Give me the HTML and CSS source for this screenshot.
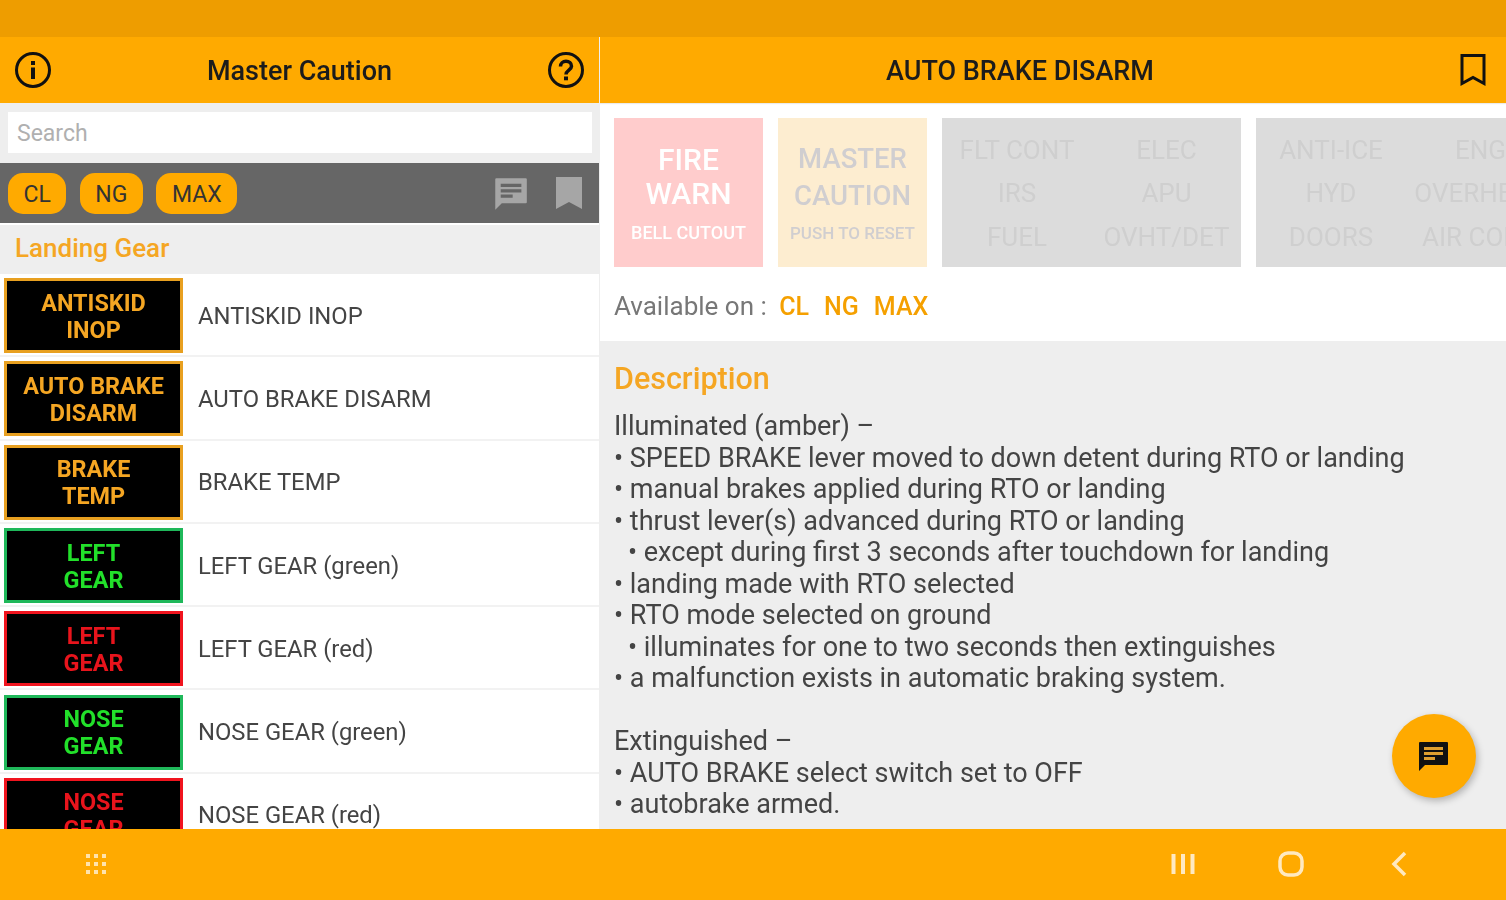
FILE: index.html

```html
<!DOCTYPE html>
<html lang="en">
<head>
  <meta charset="UTF-8" />
  <meta name="viewport" content="width=device-width, initial-scale=1.0"/>
  <title>Master Caution</title>
  <link rel="stylesheet" href="styles.css">
</head>
<body>
  <div class="status-bar"></div>
  <div class="panes">
    <section class="list-pane">
      <header class="app-bar">
        <svg class="bar-icon" viewBox="0 0 38 38"><circle cx="19" cy="19" r="16.5"/><path class="solid" d="M17 16.5h4V28h-4zM17 10h4v4h-4z"/></svg>
        <h1>Master Caution</h1>
        <svg class="bar-icon" viewBox="0 0 38 38"><circle cx="19" cy="19" r="16.5"/><path class="thick" d="M13.5 15.5c0-3.2 2.4-5.2 5.5-5.2s5.500 2 5.500 4.900c0 3.800-5.500 4-5.500 8.300"/><path class="solid" d="M17 25.500h4v3.800h-4z"/></svg>
      </header>
      <div class="search-wrap"><div class="search">Search</div></div>
      <div class="filter-bar">
        <span class="chip">CL</span>
        <span class="chip">NG</span>
        <span class="chip">MAX</span>
        <svg class="filter-icon first" viewBox="0 0 34 34"><path d="M4 3h27a1 1 0 0 1 1 1v21a1 1 0 0 1-1 1H9l-6 6V4a1 1 0 0 1 1-1z"/><path class="cut" d="M8 8h19v3H8zM8 13h19v3H8zM8 18h11v3H8z"/></svg>
        <svg class="filter-icon mark" viewBox="0 0 30 36"><path d="M2 2h26v32l-13-7-13 7z"/></svg>
      </div>
      <div class="group-title">Landing Gear</div>
      <div class="rows">
        <div class="row"><div class="badge amber">ANTISKID<br>INOP</div><span>ANTISKID INOP</span></div>
        <div class="row"><div class="badge amber">AUTO BRAKE<br>DISARM</div><span>AUTO BRAKE DISARM</span></div>
        <div class="row"><div class="badge amber">BRAKE<br>TEMP</div><span>BRAKE TEMP</span></div>
        <div class="row"><div class="badge green">LEFT<br>GEAR</div><span>LEFT GEAR (green)</span></div>
        <div class="row"><div class="badge red">LEFT<br>GEAR</div><span>LEFT GEAR (red)</span></div>
        <div class="row"><div class="badge green">NOSE<br>GEAR</div><span>NOSE GEAR (green)</span></div>
        <div class="row"><div class="badge red">NOSE<br>GEAR</div><span>NOSE GEAR (red)</span></div>
      </div>
    </section>

    <section class="detail-pane">
      <header class="app-bar detail-bar">
        <h1>AUTO BRAKE DISARM</h1>
        <svg class="bookmark" viewBox="0 0 28 34"><path d="M3 2.500h22v28l-11-6-11 6z"/></svg>
      </header>
      <div class="panel-strip">
        <div class="tile fire"><b>FIRE<br>WARN</b><small>BELL CUTOUT</small></div>
        <div class="tile caution"><b>MASTER<br>CAUTION</b><small>PUSH TO RESET</small></div>
        <div class="tile grid-tile">
          <span>FLT CONT</span><span>ELEC</span>
          <span>IRS</span><span>APU</span>
          <span>FUEL</span><span>OVHT/DET</span>
        </div>
        <div class="tile grid-tile last">
          <span>ANTI-ICE</span><span>ENG</span>
          <span>HYD</span><span>OVERHEAD</span>
          <span>DOORS</span><span>AIR COND</span>
        </div>
      </div>
      <div class="available">Available on : <em>CL</em><em>NG</em><em>MAX</em></div>
      <div class="description">
        <h2>Description</h2>
        <p>Illuminated (amber) –</p>
        <p>• SPEED BRAKE lever moved to down detent during RTO or landing</p>
        <p>• manual brakes applied during RTO or landing</p>
        <p>• thrust lever(s) advanced during RTO or landing</p>
        <p class="sub">• except during first 3 seconds after touchdown for landing</p>
        <p>• landing made with RTO selected</p>
        <p>• RTO mode selected on ground</p>
        <p class="sub">• illuminates for one to two seconds then extinguishes</p>
        <p>• a malfunction exists in automatic braking system.</p>
        <p class="blank">&nbsp;</p>
        <p>Extinguished –</p>
        <p>• AUTO BRAKE select switch set to OFF</p>
        <p>• autobrake armed.</p>
        <button class="fab">
          <svg viewBox="0 0 34 34"><path d="M4 3h27a1 1 0 0 1 1 1v21a1 1 0 0 1-1 1H9l-6 6V4a1 1 0 0 1 1-1z"/><path class="fab-lines" d="M8 8h19v3H8zM8 13h19v3H8zM8 18h11v3H8z"/></svg>
        </button>
      </div>
    </section>
  </div>
  <nav class="nav-bar">
    <svg class="nav-apps" viewBox="0 0 22 22"><path d="M1 1h4v4H1zM9 1h4v4H9zM17 1h4v4h-4zM1 9h4v4H1zM9 9h4v4H9zM17 9h4v4h-4zM1 17h4v4H1zM9 17h4v4H9zM17 17h4v4h-4z"/></svg>
    <svg class="nav-recent" viewBox="0 0 26 22"><path d="M1.500 1h4v20h-4zM11 1h4v20h-4zM20.500 1h4v20h-4z"/></svg>
    <svg class="nav-home" viewBox="0 0 26 26"><rect x="2" y="2" width="22" height="22" rx="8"/></svg>
    <svg class="nav-back" viewBox="0 0 18 26"><path d="M15 2 4 13l11 11"/></svg>
  </nav>
</body>
</html>
```

FILE: styles.css

```css
html, body { height: 100%; }
body { margin: 0; height: 900px; overflow: hidden; display: flex; flex-direction: column; font-family: Roboto, sans-serif; background: #fff; color: #333; }
h1, h2, p { margin: 0; }

.status-bar { height: 37px; flex: none; background: #ee9d00; }
/* the source is a soft, upscaled capture */
.panes { flex: 1; min-height: 0; display: flex; filter: blur(0.5px); }

.app-bar { height: 66px; flex: none; display: flex; align-items: center; justify-content: space-between; padding: 0 14px; background: #ffaa00; box-shadow: 0 1px 1px rgba(0,0,0,0.08); }
.app-bar h1 { padding-top: 2px; font-size: 27px; font-weight: 500; color: #1c1c1c; }
.bar-icon { width: 38px; height: 38px; fill: none; stroke: #111; stroke-width: 3; }
.bar-icon .solid { fill: #111; stroke: none; }
.bar-icon .thick { stroke-width: 3.500; }

.list-pane { width: 600px; flex: none; display: flex; flex-direction: column; overflow: hidden; border-right: 1px solid #eee; box-sizing: border-box; }
.search-wrap { height: 60px; flex: none; box-sizing: border-box; padding: 9px 7px 10px 8px; background: #eeeeee; }
.search { height: 41px; line-height: 43px; padding-left: 9px; background: #fff; font-size: 23px; color: #b0b0b0; }

.filter-bar { height: 60px; flex: none; display: flex; align-items: center; gap: 13.500px; padding: 0 15px 0 8px; background: #666; box-sizing: border-box; }
.chip { height: 41px; line-height: 43px; padding: 0 15.500px; border-radius: 15px; background: #ffaa00; font-size: 23px; color: #333; }
.filter-icon { width: 30px; height: 36px; fill: #a6a6a6; }
.filter-icon.first { width: 37px; height: 37px; margin-left: auto; margin-right: 12px; }
.filter-icon .cut { fill: #666; }

.group-title { height: 49px; flex: none; margin-top: 2px; padding-left: 15px; line-height: 47px; background: #eeeeee; font-size: 26px; font-weight: 500; color: #f5a623; }

.rows { flex: 1; min-height: 0; overflow: hidden; }
.row { height: 83.300px; box-sizing: border-box; display: flex; align-items: center; gap: 15px; padding: 2px 0 0 4px; border-bottom: 2px solid #f2f2f2; font-size: 23.800px; color: #444; }
.badge { width: 179px; height: 75px; flex: none; box-sizing: border-box; display: flex; align-items: center; justify-content: center; padding-top: 2px; text-align: center; background: #000; border: 3px solid; font-size: 23.400px; font-weight: 700; line-height: 27px; }
.badge.amber { color: #f5a623; border-color: #e8a020; }
.badge.green { color: #22e02a; border-color: #1fb85a; }
.badge.red { color: #e8141c; border-color: #f0141e; }

.detail-pane { flex: 1; min-width: 0; display: flex; flex-direction: column; overflow: hidden; }
.detail-bar { justify-content: center; position: relative; }
.detail-bar h1 { margin-right: 66px; }
.bookmark { position: absolute; right: 19px; top: 16px; width: 28px; height: 34px; fill: none; stroke: #111; stroke-width: 3; }

.panel-strip { height: 149px; flex: none; display: flex; gap: 15px; padding: 15px 0 0 14px; }
.tile { flex: none; height: 149px; box-sizing: border-box; text-align: center; }
.tile.fire, .tile.caution { width: 149px; display: flex; flex-direction: column; justify-content: flex-start; }
.tile.fire { padding-top: 25px; }
.tile.caution { padding-top: 22px; }
.tile b { font-size: 30px; line-height: 34px; font-weight: 500; }
.tile small { margin-top: 11px; font-size: 18px; font-weight: 500; }
.fire { background: #ffcccc; color: #fff; }
.caution { background: #fdedd0; color: #d0ced0; }
.caution b { font-size: 27.500px; line-height: 37px; }
.caution small { margin-top: 9px; font-size: 17px; }
.grid-tile { width: 299px; display: grid; grid-template-columns: 150px 149px; grid-auto-rows: 43.500px; align-items: center; padding-top: 10px; background: #dcdcdc; color: #cfcfcf; font-size: 26px; white-space: nowrap; overflow: hidden; }
.grid-tile.last { width: 300px; }

.available { height: 74px; flex: none; padding: 24px 0 0 14px; box-sizing: border-box; font-size: 26px; color: #777; }
.available em { margin-right: 15px; font-size: 25px; font-style: normal; font-weight: 500; color: #f5a000; }
.available em:first-of-type { margin-left: 6px; }

.description { flex: 1; min-height: 0; position: relative; overflow: hidden; padding: 20px 14px 0; background: #eeeeee; font-size: 27px; line-height: 31.500px; color: #444; }
.description h2 { margin-bottom: 14px; font-size: 30.500px; line-height: 36px; font-weight: 500; color: #f5a623; }
.description .sub { padding-left: 14px; }
.fab { position: absolute; right: 30px; bottom: 31px; width: 84px; height: 84px; padding: 0 2px 0 0; border: none; border-radius: 50%; background: #ffaa00; box-shadow: 2px 3px 7px rgba(0,0,0,0.25); display: flex; align-items: center; justify-content: center; }
.fab svg { width: 34px; height: 34px; fill: #111; }
.fab .fab-lines { fill: #e0a030; }

.nav-bar { height: 71px; flex: none; box-sizing: border-box; padding-bottom: 2px; position: relative; z-index: 1; display: flex; align-items: center; background: #ffaa00; }
.nav-bar svg { flex: none; }
.nav-apps { width: 22px; height: 22px; margin-left: 85px; fill: #ffe3ac; }
.nav-recent { width: 26px; height: 22px; margin-left: auto; fill: #ffe9c0; }
.nav-home { width: 26px; height: 26px; margin-left: 82px; fill: none; stroke: #ffe9c0; stroke-width: 3.500; }
.nav-back { width: 18px; height: 26px; margin-left: 86px; margin-right: 98px; fill: none; stroke: #ffe9c0; stroke-width: 3.500; }
```
